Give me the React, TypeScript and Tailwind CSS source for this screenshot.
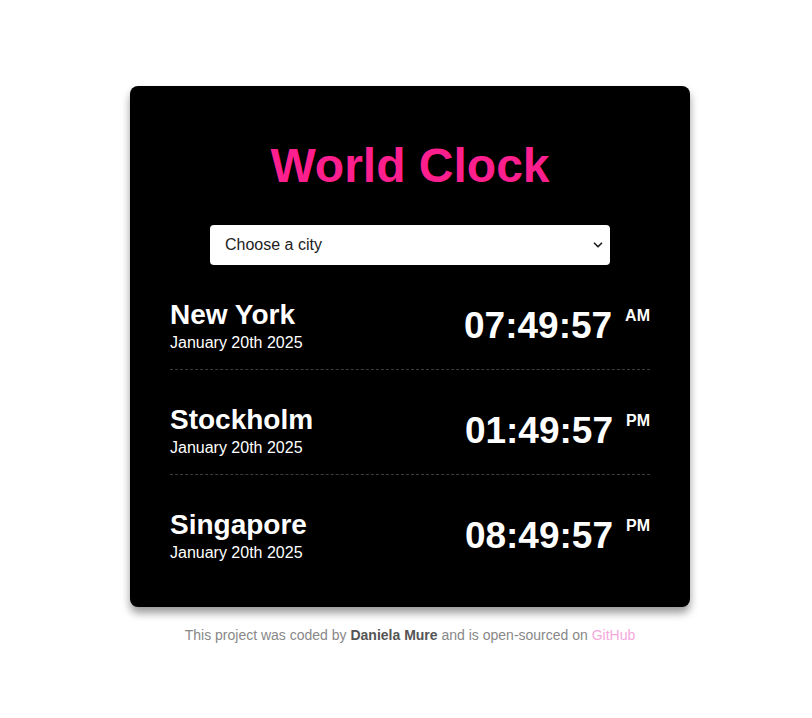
import { ChevronDown } from "lucide-react";

const cities = [
  { name: "New York", date: "January 20th 2025", time: "07:49:57", ampm: "AM" },
  { name: "Stockholm", date: "January 20th 2025", time: "01:49:57", ampm: "PM" },
  { name: "Singapore", date: "January 20th 2025", time: "08:49:57", ampm: "PM" },
];

export default function App() {
  return (
    <div className="min-h-[718px] bg-white pl-2 font-['Liberation_Sans',Arial,sans-serif]">
      <div className="mx-auto w-[560px] pt-[86px]">
        <div className="rounded-lg bg-black px-10 pt-[52px] pb-[28px] shadow-[0_6px_8px_rgba(0,0,0,0.4)]">
          <h1 className="text-center text-[48px] font-bold leading-[55px] text-[#fe1f8e]">
            World Clock
          </h1>

          <div className="relative mx-auto mt-8 h-10 w-[400px]">
            <select className="h-10 w-full appearance-none rounded bg-white pl-[15px] text-[16px] text-[#222] outline-none">
              <option>Choose a city</option>
            </select>
            <ChevronDown
              className="pointer-events-none absolute right-[5px] top-[13px] text-[#222]"
              size={14}
              strokeWidth={3}
            />
          </div>

          <div>
            {cities.map((city, index) => (
              <div
                key={city.name}
                className={`flex items-center justify-between pt-[34px] pb-[17px] ${
                  index < cities.length - 1 ? "border-b border-dashed border-[#3d3d3d]" : ""
                }`}
              >
                <div className="text-white">
                  <div className="mb-1 text-[28px] font-bold leading-[31px]">
                    {city.name}
                  </div>
                  <div className="text-[16px] leading-[18px]">{city.date}</div>
                </div>
                <div className="flex items-start text-white">
                  <span className="text-[37px] font-bold leading-[44px]">
                    {city.time}
                  </span>
                  <span className="ml-[13px] mt-[3px] text-[16px] font-bold leading-[18px]">
                    {city.ampm}
                  </span>
                </div>
              </div>
            ))}
          </div>
        </div>

        <p className="mt-[20px] text-center text-[14px] leading-[16px] text-[#888]">
          This project was coded by{" "}
          <span className="font-bold text-[#555]">Daniela Mure</span> and is
          open-sourced on <a className="text-[#f5a8dc]">GitHub</a>
        </p>
      </div>
    </div>
  );
}
